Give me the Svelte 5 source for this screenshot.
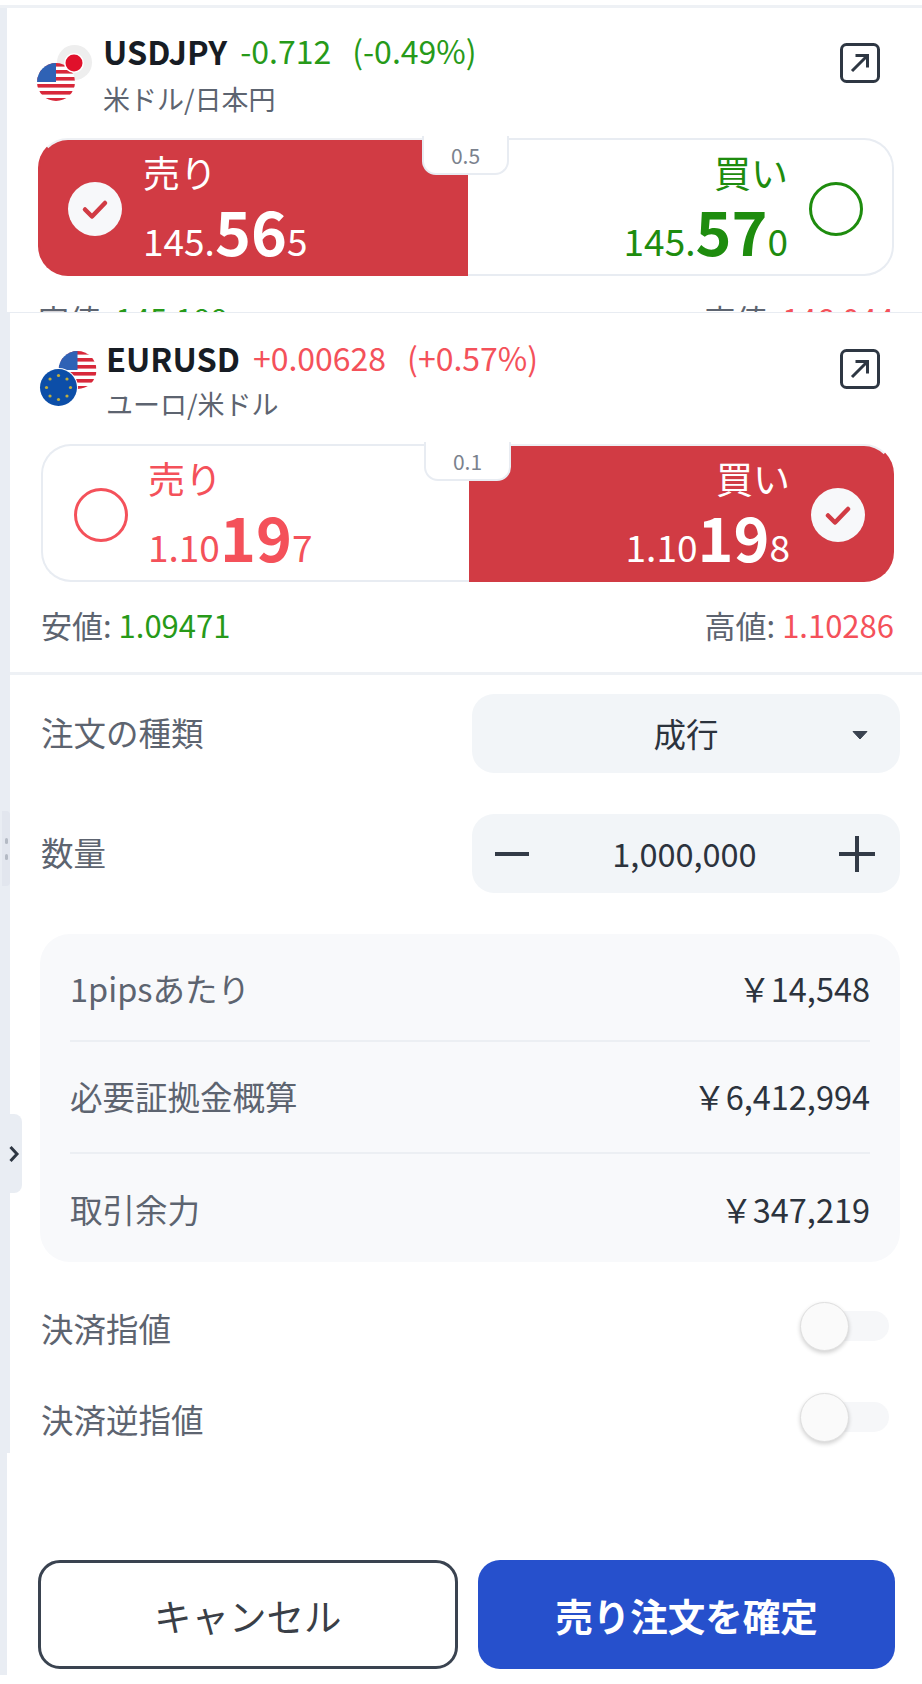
<script>
  const stars = Array.from({ length: 8 }, (_, i) => {
    const a = (i / 8) * Math.PI * 2;
    return { x: 21.5 + Math.cos(a) * 12, y: 39.5 + Math.sin(a) * 12 };
  });

  const stripes = [0, 1, 2, 3, 4, 5];

  const pairs = [
    {
      id: 'usdjpy',
      name: 'USDJPY',
      sub: '米ドル/日本円',
      change: '-0.712',
      pct: '(-0.49%)',
      dir: 'down',
      spread: '0.5',
      pick: 'sell',
      bid: ['145.', '56', '5'],
      ask: ['145.', '57', '0'],
      low: '145.188',
      high: '146.044'
    },
    {
      id: 'eurusd',
      name: 'EURUSD',
      sub: 'ユーロ/米ドル',
      change: '+0.00628',
      pct: '(+0.57%)',
      dir: 'up',
      spread: '0.1',
      pick: 'buy',
      bid: ['1.10', '19', '7'],
      ask: ['1.10', '19', '8'],
      low: '1.09471',
      high: '1.10286'
    }
  ];

  const infoRows = [
    { label: '1pipsあたり', value: '￥14,548' },
    { label: '必要証拠金概算', value: '￥6,412,994' },
    { label: '取引余力', value: '￥347,219' }
  ];
</script>

{#snippet usFlag(cx, cy, r, key)}
  <clipPath id={key}><circle {cx} {cy} {r} /></clipPath>
  <g clip-path="url(#{key})">
    <rect x={cx - r} y={cy - r} width={r * 2} height={r * 2} fill="#fff" />
    {#each stripes as s}
      <rect x={cx - r} y={cy - r + s * 7} width={r * 2} height="3.6" fill="#d8283a" />
    {/each}
    <rect x={cx - r} y={cy - r} width={r} height={r} fill="#2f62b5" />
  </g>
{/snippet}

{#snippet flag(id)}
  <svg class="flag" viewBox="0 0 60 60" width="60" height="60">
    {#if id === 'usdjpy'}
      <circle cx="40.5" cy="20.5" r="17.5" fill="#eeeeee" />
      {@render usFlag(22, 40, 19, 'us-a')}
      <circle cx="40" cy="21" r="10" fill="#fff" />
      <circle cx="40" cy="21" r="8.5" fill="#e0112b" />
    {:else}
      {@render usFlag(40.5, 22, 19, 'us-b')}
      <circle cx="21.5" cy="39.5" r="19.5" fill="#fff" />
      <circle cx="21.5" cy="39.5" r="18.5" fill="#0c4ea8" />
      {#each stars as s}
        <circle cx={s.x} cy={s.y} r="1.6" fill="#bfae3e" />
      {/each}
    {/if}
  </svg>
{/snippet}

{#snippet check()}
  <span class="check">
    <svg viewBox="0 0 54 54" width="54" height="54">
      <path d="M17 27.5 L24 34.5 L37 21" fill="none" stroke="#d13b44" stroke-width="4.5" stroke-linecap="round" stroke-linejoin="round" />
    </svg>
  </span>
{/snippet}

{#snippet price(p)}
  <div class="price"><span class="sm">{p[0]}</span><span class="lg">{p[1]}</span><span class="sm">{p[2]}</span></div>
{/snippet}

<div class="page">
  <div class="topline"></div>

  <div class="shell">
    <span class="grip"><i></i><i></i></span>
    <button class="collapse" aria-label="collapse">
      <svg viewBox="0 0 12 20" width="12" height="20">
        <path d="M2.5 3 L9 10 L2.5 17" fill="none" stroke="#2e3743" stroke-width="3" />
      </svg>
    </button>

    {@render pairBlock(pairs[0])}

    <section class="trade">
      {@render pairBlock(pairs[1])}

      <div class="form">
        <div class="field">
          <span class="label">注文の種類</span>
          <div class="control select">
            <span>成行</span>
            <svg class="caret" viewBox="0 0 16 10" width="16" height="10"><path d="M1 1.5 H15 L8 9 Z" fill="#3a4350" stroke="#3a4350" stroke-linejoin="round" /></svg>
          </div>
        </div>
        <div class="field">
          <span class="label">数量</span>
          <div class="control qty">
            <svg viewBox="0 0 36 36" width="36" height="36"><path d="M1 18 H35" stroke="#333b47" stroke-width="4" /></svg>
            <span>1,000,000</span>
            <svg viewBox="0 0 36 36" width="36" height="36"><path d="M0 18 H36 M18 0 V36" stroke="#333b47" stroke-width="4" /></svg>
          </div>
        </div>

        <div class="info">
          {#each infoRows as row}
            <div class="info-row">
              <span>{row.label}</span>
              <span class="val">{row.value}</span>
            </div>
          {/each}
        </div>

        <div class="switch-row">
          <span class="label">決済指値</span>
          <span class="switch"><i></i></span>
        </div>
        <div class="switch-row">
          <span class="label">決済逆指値</span>
          <span class="switch"><i></i></span>
        </div>
      </div>
    </section>

    <div class="actions">
      <button class="btn cancel">キャンセル</button>
      <button class="btn confirm">売り注文を確定</button>
    </div>
  </div>
</div>

{#snippet pairBlock(p)}
  <div class="pair {p.id}">
    <div class="head">
      {@render flag(p.id)}
      <div class="titles">
        <div class="title">
          <span class="name">{p.name}</span>
          <span class="chg {p.dir}">{p.change}</span>
          <span class="chg {p.dir}">{p.pct}</span>
        </div>
        <div class="sub">{p.sub}</div>
      </div>
      <button class="open" aria-label="open">
        <svg viewBox="0 0 40 40" width="40" height="40">
          <rect x="1.5" y="1.5" width="37" height="37" rx="5" fill="none" stroke="#2e3743" stroke-width="3" />
          <path d="M12 28 L27 13 M15.5 12.5 H27.5 V24.5" fill="none" stroke="#2e3743" stroke-width="3" />
        </svg>
      </button>
    </div>

    <div class="toggle">
      <div class="side sell" class:on={p.pick === 'sell'}>
        {#if p.pick === 'sell'}
          {@render check()}
        {:else}
          <span class="ring"></span>
        {/if}
        <div class="quote">
          <div class="kind">売り</div>
          {@render price(p.bid)}
        </div>
      </div>
      <div class="side buy" class:on={p.pick === 'buy'}>
        <div class="quote">
          <div class="kind">買い</div>
          {@render price(p.ask)}
        </div>
        {#if p.pick === 'buy'}
          {@render check()}
        {:else}
          <span class="ring"></span>
        {/if}
      </div>
      <span class="spread">{p.spread}</span>
    </div>

    <div class="range">
      <span>安値: <b class="down">{p.low}</b></span>
      <span>高値: <b class="up">{p.high}</b></span>
    </div>
  </div>
{/snippet}

<style>
  :global(body) {
    margin: 0;
    background: #fff;
  }

  .page {
    width: 922px;
    height: 1684px;
    overflow: hidden;
    font-family: "Noto Sans CJK JP", "Noto Sans", sans-serif;
    color: #5d6470;
  }

  .topline {
    height: 3px;
    margin-top: 5px;
    background: #eef1f5;
  }

  .shell {
    position: relative;
    height: 1667px;
    box-sizing: border-box;
    border-left: 7px solid #e9edf3;
    background: #fff;
  }

  .grip {
    position: absolute;
    left: -5px;
    top: 803px;
    width: 8px;
    height: 75px;
    background: #e2e6ee;
    border-radius: 0 4px 4px 0;
    display: flex;
    flex-direction: column;
    align-items: center;
    justify-content: center;
    gap: 10px;
    z-index: 2;
  }

  .grip i {
    width: 3px;
    height: 6px;
    border-radius: 2px;
    background: #b4bac4;
  }

  .collapse {
    position: absolute;
    left: -2px;
    top: 1106px;
    width: 17px;
    height: 79px;
    padding: 0;
    border: 0;
    border-radius: 0 8px 8px 0;
    background: #e9edf3;
    display: flex;
    align-items: center;
    justify-content: center;
    z-index: 2;
  }

  .pair {
    box-sizing: border-box;
    padding: 25px 28px 0 31px;
  }

  .pair.usdjpy {
    height: 304px;
    overflow: hidden;
  }

  .pair.eurusd {
    padding-top: 27px;
    padding-bottom: 27px;
    border-bottom: 3px solid #eef1f5;
  }

  .head {
    display: flex;
    align-items: flex-start;
    height: 84px;
    margin-bottom: 21px;
  }

  .eurusd .head {
    height: 83px;
  }

  .flag {
    flex: none;
    margin: 9px 9px 0 -4px;
  }

  .eurusd .flag {
    margin-top: 8px;
  }

  .titles {
    flex: 1;
  }

  .title {
    display: flex;
    align-items: center;
    height: 34px;
  }

  .name {
    font-size: 32.5px;
    font-weight: 700;
    color: #171c24;
    margin-right: 13px;
  }

  .chg {
    font-size: 32px;
    margin-right: 21px;
  }

  .up {
    color: #f4515a;
  }

  .down {
    color: #279a19;
  }

  .sub {
    font-size: 27px;
    line-height: 34px;
    margin-top: 15px;
  }

  .eurusd .sub {
    margin-top: 13px;
  }

  .open {
    margin: 10px 14px 0 0;
    padding: 0;
    border: 0;
    background: none;
    width: 40px;
    height: 40px;
  }

  .eurusd .open {
    margin-top: 9px;
  }

  .toggle {
    position: relative;
    display: flex;
    height: 138px;
    box-sizing: border-box;
  }

  .side {
    flex: 1;
    display: flex;
    align-items: center;
    box-sizing: border-box;
    border: 2px solid #e8ecf2;
    background: #fff;
  }

  .side.sell {
    flex: 0 0 430px;
    border-right: 0;
    border-radius: 30px 0 0 30px;
    padding-left: 28px;
    gap: 21px;
    color: #f4515a;
  }

  .eurusd .side.sell {
    flex-basis: 428px;
    padding-left: 31px;
    gap: 20px;
  }

  .side.buy {
    border-left: 0;
    border-radius: 0 30px 30px 0;
    justify-content: flex-end;
    padding-right: 29px;
    gap: 21px;
    color: #1e8c0e;
  }

  .eurusd .side.buy {
    padding-right: 27px;
  }

  .side.on {
    background: #d13b44;
    border-color: #d13b44;
    border-top-color: #eef0f4;
    color: #fff;
  }

  .check {
    flex: none;
    width: 54px;
    height: 54px;
    margin-top: 4px;
    border-radius: 50%;
    background: #f7f8fa;
  }

  .check svg {
    display: block;
  }

  .ring {
    flex: none;
    width: 54px;
    height: 54px;
    margin-top: 4px;
    box-sizing: border-box;
    border-radius: 50%;
    border: 3px solid currentColor;
  }

  .quote {
    display: flex;
    flex-direction: column;
    padding-top: 18px;
  }

  .buy .quote {
    align-items: flex-end;
  }

  .kind {
    font-size: 37px;
    line-height: 40px;
    margin-bottom: 6px;
  }

  .price {
    line-height: 64px;
    white-space: nowrap;
  }

  .sm {
    font-size: 37px;
  }

  .lg {
    font-size: 61px;
    font-weight: 700;
  }

  .spread {
    position: absolute;
    left: 384px;
    top: -2px;
    width: 87px;
    height: 39px;
    box-sizing: border-box;
    background: #fff;
    border: 2px solid #e8ecf2;
    border-top: 0;
    border-radius: 0 0 14px 14px;
    display: flex;
    align-items: center;
    justify-content: center;
    font-size: 21px;
    color: #7b828e;
  }

  .eurusd .spread {
    left: 383px;
  }

  .range {
    display: flex;
    justify-content: space-between;
    font-size: 31px;
    line-height: 40px;
    margin-top: 23px;
  }

  .range b {
    font-weight: 400;
  }

  .trade {
    box-sizing: border-box;
    border-left: 3px solid #e9edf3;
    border-top: 1px solid #e8ecf2;
    height: 1141px;
  }

  .form {
    padding: 19px 22px 0 31px;
  }

  .field {
    display: flex;
    justify-content: space-between;
    align-items: center;
    margin-bottom: 41px;
  }

  .label {
    font-size: 32.5px;
    line-height: 40px;
    color: #5d6470;
  }

  .field .label {
    margin-top: -3px;
  }

  .control {
    width: 428px;
    height: 79px;
    box-sizing: border-box;
    border-radius: 22px;
    background: #f2f5f8;
    font-size: 32.5px;
    color: #2c333d;
    display: flex;
    align-items: center;
  }

  .control span {
    margin-top: -3px;
  }

  .select {
    position: relative;
    justify-content: center;
  }

  .caret {
    position: absolute;
    right: 32px;
    top: 36px;
  }

  .qty {
    justify-content: space-between;
    padding: 0 25px 0 22px;
  }

  .info {
    margin-left: -1px;
    padding: 0 30px;
    background: #f8f9fb;
    border-radius: 30px;
  }

  .info-row {
    display: flex;
    justify-content: space-between;
    align-items: center;
    box-sizing: border-box;
    height: 108px;
    font-size: 32.5px;
    border-bottom: 2px solid #eceff3;
  }

  .info-row:nth-child(2) {
    height: 112px;
    padding-bottom: 4px;
  }

  .info-row:last-child {
    height: 108px;
    border-bottom: 0;
  }

  .val {
    color: #2c333d;
  }

  .switch-row {
    display: flex;
    justify-content: space-between;
    height: 48px;
    padding-right: 11px;
    margin-top: 40px;
    margin-bottom: 43px;
  }

  .switch-row .label {
    margin-top: 6px;
  }

  .switch-row + .switch-row {
    margin-top: 0;
  }

  .switch {
    position: relative;
    width: 88px;
    height: 30px;
    margin-top: 9px;
    border-radius: 15px;
    background: #f6f7f9;
  }

  .switch i {
    position: absolute;
    left: -1px;
    top: -9px;
    width: 49px;
    height: 49px;
    box-sizing: border-box;
    border-radius: 50%;
    background: #fafafa;
    border: 1px solid #dfdfdf;
    box-shadow: 0 2px 4px rgba(0, 0, 0, 0.18);
  }

  .actions {
    display: flex;
    gap: 20px;
    padding: 107px 27px 0 30.5px;
  }

  .btn {
    height: 109px;
    box-sizing: border-box;
    border-radius: 22px;
    font-family: inherit;
    font-size: 37.5px;
    padding: 0;
  }

  .cancel {
    flex: 0 0 420.5px;
    border: 3px solid #3a4350;
    background: #fff;
    color: #3a3f47;
  }

  .confirm {
    flex: 1;
    border: 0;
    background: #2650cc;
    color: #fff;
    font-weight: 700;
  }
</style>
